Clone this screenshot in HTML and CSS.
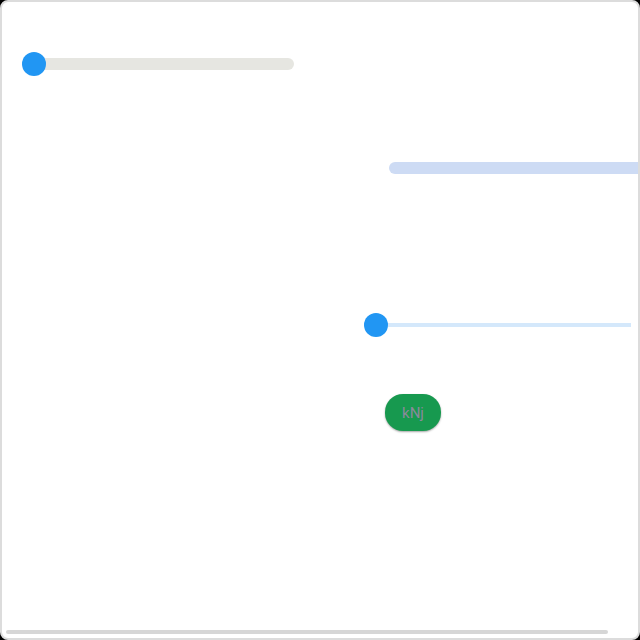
FILE: index.html
```html
<!DOCTYPE html>
<html>
<head>
<meta charset="utf-8">
<link rel="stylesheet" href="styles.css">
</head>
<body>
<div class="frame">
  <div class="slider slider-a">
    <div class="track track-a"></div>
    <div class="thumb"></div>
  </div>
  <div class="track track-b"></div>
  <div class="slider slider-c">
    <div class="track track-c"></div>
    <div class="thumb"></div>
  </div>
  <button class="pill">kNj</button>
  <div class="hscroll"></div>
</div>
</body>
</html>
```
FILE: styles.css
```css
html, body {
  margin: 0;
  padding: 0;
  background: #000;
}
.frame {
  position: relative;
  box-sizing: border-box;
  width: 640px;
  height: 640px;
  background: #fff;
  border: 2px solid #dcdcdc;
  border-radius: 8px;
  overflow: hidden;
  display: flex;
  flex-direction: column;
  align-items: flex-start;
  font-family: Roboto, "Liberation Sans", sans-serif;
}
.slider {
  position: relative;
  display: flex;
  align-items: center;
  height: 24px;
  flex-shrink: 0;
}
.slider-a {
  margin: 50px 0 0 20px;
  width: 272px;
}
.track-a {
  margin-left: 8px;
  flex: 1;
  height: 12px;
  border-radius: 6px;
  background: #e6e6e1;
}
.track-b {
  margin: 86px 0 0 387px;
  width: 270px;
  height: 12px;
  border-radius: 6px;
  background: #cddbf4;
  flex-shrink: 0;
}
.slider-c {
  margin: 139px 0 0 362px;
  width: 267px;
}
.track-c {
  margin-left: 24px;
  flex: 1;
  height: 4px;
  background: #d4e8fb;
}
.thumb {
  position: absolute;
  left: 0;
  top: 0;
  width: 24px;
  height: 24px;
  border-radius: 50%;
  background: #2196f3;
}
.pill {
  margin: 57px 0 0 383px;
  width: 56px;
  height: 37px;
  border: none;
  border-radius: 18px;
  background: #17994f;
  color: #8a8a9c;
  font-family: Roboto, "Liberation Sans", sans-serif;
  font-size: 15px;
  padding: 1px 0 0;
  box-shadow: 0 1px 2px rgba(0, 0, 0, 0.35);
  flex-shrink: 0;
}
.hscroll {
  position: absolute;
  left: 4px;
  bottom: 4px;
  width: 602px;
  height: 4px;
  border-radius: 2px;
  background: #d6d6d6;
}
```
